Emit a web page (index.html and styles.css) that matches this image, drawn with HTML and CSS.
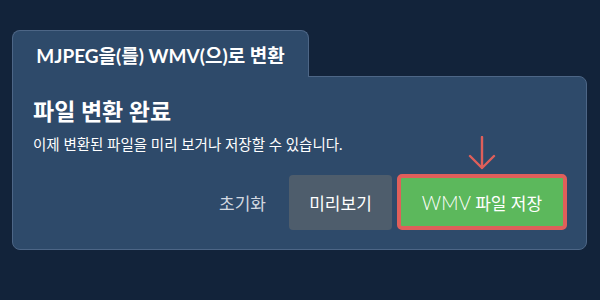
FILE: index.html
```html
<!DOCTYPE html>
<html lang="ko">
<head>
    <meta charset="UTF-8">
    <meta name="viewport" content="width=device-width, initial-scale=1.0">
    <title>MJPEG을(를) WMV(으)로 변환</title>
    <link rel="stylesheet" href="styles.css">
</head>
<body>
    <!-- Konverter-Karte -->
    <div class="converter">
        <div class="tab">MJPEG을(를) WMV(으)로 변환</div>
        <div class="panel">
            <h2 class="panel-title">파일 변환 완료</h2>
            <p class="panel-text">이제 변환된 파일을 미리 보거나 저장할 수 있습니다.</p>

            <div class="actions">
                <button class="btn btn-link">초기화</button>
                <button class="btn btn-preview">미리보기</button>
                <div class="save-wrap">
                    <svg class="hint-arrow" width="28" height="34" viewBox="0 0 28 34">
                        <path d="M14 1 V32 M2 20 L14 32 L26 20" fill="none" stroke="#df5f5a" stroke-width="2.4" stroke-linecap="round" stroke-linejoin="round"/>
                    </svg>
                    <button class="btn btn-save"><span class="latin">WMV</span> 파일 저장</button>
                </div>
            </div>
        </div>
    </div>
</body>
</html>
```

FILE: styles.css
```css
/* Grunddesign */
body {
    font-family: Lato, "Noto Sans CJK KR", sans-serif;
    background-color: #12233a;
    color: #ffffff;
    margin: 0;
    padding: 30px 13px 0 12px;
}

/* Karte mit Reiter */
.converter {
    display: flex;
    flex-direction: column;
    align-items: flex-start;
}

.tab {
    position: relative;
    z-index: 1;
    background-color: #2e4a6a;
    border: 1px solid #4d6686;
    border-bottom: none;
    border-radius: 8px 8px 0 0;
    padding: 0 10px;
    height: 47px;
    line-height: 50px;
    font-size: 19px;
    font-weight: bold;
    margin-bottom: -1px;
    text-align: center;
    box-sizing: border-box;
    width: 297px;
}

.panel {
    align-self: stretch;
    background-color: #2e4a6a;
    border: 1px solid #4d6686;
    border-radius: 0 8px 8px 8px;
    padding: 20px 19px 19px 20px;
}

.panel-title {
    margin: 0;
    font-size: 23px;
    font-weight: bold;
    line-height: 28px;
}

.panel-text {
    margin: 10px 0 0;
    font-size: 14.5px;
    line-height: 20px;
}

/* Buttons */
.actions {
    display: flex;
    justify-content: flex-end;
    align-items: center;
    margin-top: 19px;
}

.btn {
    font-family: inherit;
    font-size: 17px;
    color: #ffffff;
    border: none;
    cursor: pointer;
}

.btn-link {
    background: none;
    color: #d2d8e0;
    padding: 0;
    margin-right: 23px;
}

.btn-preview {
    background-color: #4e5d6c;
    border-radius: 4px;
    width: 103px;
    height: 55px;
    margin-right: 5px;
}

.save-wrap {
    position: relative;
}

.hint-arrow {
    position: absolute;
    left: 71px;
    top: -38px;
}

.btn-save {
    display: block;
    background-color: #5cb85c;
    border: 4px solid #df5f5a;
    border-radius: 5px;
    width: 170px;
    height: 56px;
}

.btn-save .latin {
    font-size: 19px;
    font-weight: 300;
}
```
